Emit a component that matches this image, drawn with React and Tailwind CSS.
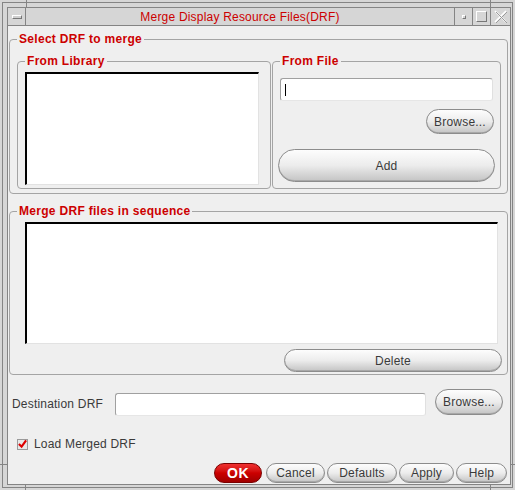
import React from 'react';

// --- SMALL PIECES ---
function Btn({ children, className = '' }) {
    return (
        <button className={`flex items-center justify-center rounded-full border border-[#8c8c8c] bg-linear-to-b from-[#fdfdfd] via-[#ececec] to-[#c4c4c4] text-[12px] tracking-[0.2px] text-[#3a3a3a] shadow-[inset_0_-1px_0_#a8a8a8] ${className}`}>
            {children}
        </button>
    );
}

function Group({ title, className = '', children }) {
    return (
        <fieldset className={`min-w-0 rounded-[4px] border border-[#a4a4a4] ${className}`}>
            <legend className="ml-[7px] px-[2px] text-[12px] leading-[16px] font-bold tracking-[0.3px] text-[#cc0000]">{title}</legend>
            {children}
        </fieldset>
    );
}

function ListBox({ className = '' }) {
    return <div className={`border-t-2 border-l-2 border-t-black border-l-black border-r border-b border-r-[#e2e2e2] border-b-[#e2e2e2] bg-white ${className}`} />;
}

function Tick({ className }) {
    return <span className={`absolute bg-[#848484] ${className}`} />;
}

// --- MAIN DIALOG ---
export default function App() {
    return (
        <div className="relative w-[515px] h-[490px] bg-[#d6d6d6] p-[2px] font-['Liberation_Sans',Arial,sans-serif] select-none">
            {/* frame resize marks */}
            <Tick className="left-[26px] top-0 h-[7px] w-px" />
            <Tick className="left-[490px] top-0 h-[7px] w-px" />
            <Tick className="left-[25px] bottom-0 h-[6px] w-px" />
            <Tick className="left-[490px] bottom-0 h-[6px] w-px" />
            <Tick className="left-0 top-[464px] h-px w-[7px]" />
            <Tick className="right-0 top-[464px] h-px w-[4px]" />

            <div className="flex h-full flex-col border border-[#848484] pt-[4px] pl-[4px] pr-[1px] pb-[2px]">
                {/* title bar */}
                <div className="flex h-[19px] border border-[#848484] bg-[#d6d6d6]">
                    <div className="flex w-[18px] items-center justify-center border-r border-[#848484]">
                        <span className="mt-[1px] h-[4px] w-[10px] border border-t-white border-l-white border-r-[#777] border-b-[#777] bg-[#cfcfcf]" />
                    </div>
                    <div className="flex flex-1 items-center justify-center border-r border-[#848484] text-[12px] tracking-[0.2px] text-[#cc0000]">
                        Merge Display Resource Files(DRF)
                    </div>
                    <div className="flex w-[18px] items-center justify-center border-r border-[#848484]">
                        <span className="mt-[1px] h-[4px] w-[4px] border border-t-white border-l-white border-r-[#777] border-b-[#777]" />
                    </div>
                    <div className="flex w-[18px] items-center justify-center border-r border-[#848484]">
                        <span className="h-[11px] w-[11px] border border-t-white border-l-white border-r-[#777] border-b-[#777]" />
                    </div>
                    <div className="flex w-[19px] items-center justify-center">
                        <svg width="15" height="14" viewBox="0 0 15 14">
                            <path d="M2 1 L13 12 M13 1 L2 12" stroke="#ffffff" strokeWidth="1.6" fill="none" />
                            <path d="M3 2 L14 13 M14 2 L3 13" stroke="#9a9a9a" strokeWidth="1" fill="none" />
                        </svg>
                    </div>
                </div>

                {/* body */}
                <div className="flex flex-1 flex-col border-x border-b border-[#848484] bg-[#efefef] pl-[1px] pr-[2px] text-[12px] tracking-[0.2px] text-[#3a3a3a]">
                    <Group title="Select DRF to merge" className="mt-[5px]">
                        <div className="mt-[6px] flex gap-[1px] pl-[7px] pr-[6px] pb-[4px]">
                            <Group title="From Library" className="w-[254px]">
                                <div className="pl-[7px] pt-[3px] pb-[3px]">
                                    <ListBox className="h-[113px] w-[234px]" />
                                </div>
                            </Group>
                            <Group title="From File" className="flex-1">
                                <div className="flex flex-col px-[7px] pt-[9px]">
                                    <div className="flex h-[23px] items-center rounded-[3px] border border-[#a0a0a0] border-b-[#e6e6e6] border-r-[#e0e0e0] bg-white pl-[4px]">
                                        <span className="h-[12px] w-px bg-black" />
                                    </div>
                                    <Btn className="mt-[8px] h-[25px] w-[68px] self-end -mr-[1px]">Browse...</Btn>
                                    <Btn className="mt-[15px] h-[33px] -mx-[2px]">Add</Btn>
                                </div>
                            </Group>
                        </div>
                    </Group>

                    <Group title="Merge DRF files in sequence" className="mt-[9px]">
                        <div className="flex flex-col pl-[15px] pr-[9px] pt-[3px] pb-[2px]">
                            <ListBox className="h-[122px]" />
                            <Btn className="mt-[5px] h-[23px] w-[218px] self-end -mr-[4px]">Delete</Btn>
                        </div>
                    </Group>

                    <div className="mt-[14px] flex items-start pl-[3px]">
                        <span className="mt-[8px] w-[103px] leading-[14px]">Destination DRF</span>
                        <div className="mt-[4px] h-[23px] w-[311px] rounded-[3px] border border-[#a0a0a0] border-b-[#e6e6e6] border-r-[#e0e0e0] bg-white" />
                        <Btn className="ml-[9px] h-[26px] w-[68px]">Browse...</Btn>
                    </div>

                    <div className="mt-[21px] flex items-center pl-[8px]">
                        <span className="flex h-[11px] w-[11px] items-center justify-center border border-[#9a9a9a] bg-[#e8e8e8]">
                            <svg width="10" height="10" viewBox="0 0 10 10">
                                <path d="M1 5 L4 8 L9 1" stroke="#dd0000" strokeWidth="2.4" fill="none" />
                            </svg>
                        </span>
                        <span className="ml-[6px] leading-[14px]">Load Merged DRF</span>
                    </div>

                    <div className="mt-[12px] flex justify-end gap-[2px] pr-[1px]">
                        <button className="flex h-[20px] w-[48px] items-center justify-center rounded-full border border-[#7a0000] bg-linear-to-b from-[#f03030] via-[#cc0000] to-[#a00000] text-[14px] font-bold tracking-[0.5px] text-white">OK</button>
                        <Btn className="ml-[2px] h-[20px] w-[59px]">Cancel</Btn>
                        <Btn className="h-[20px] w-[70px]">Defaults</Btn>
                        <Btn className="h-[20px] w-[55px]">Apply</Btn>
                        <Btn className="h-[20px] w-[51px]">Help</Btn>
                    </div>
                </div>
            </div>
        </div>
    );
}
